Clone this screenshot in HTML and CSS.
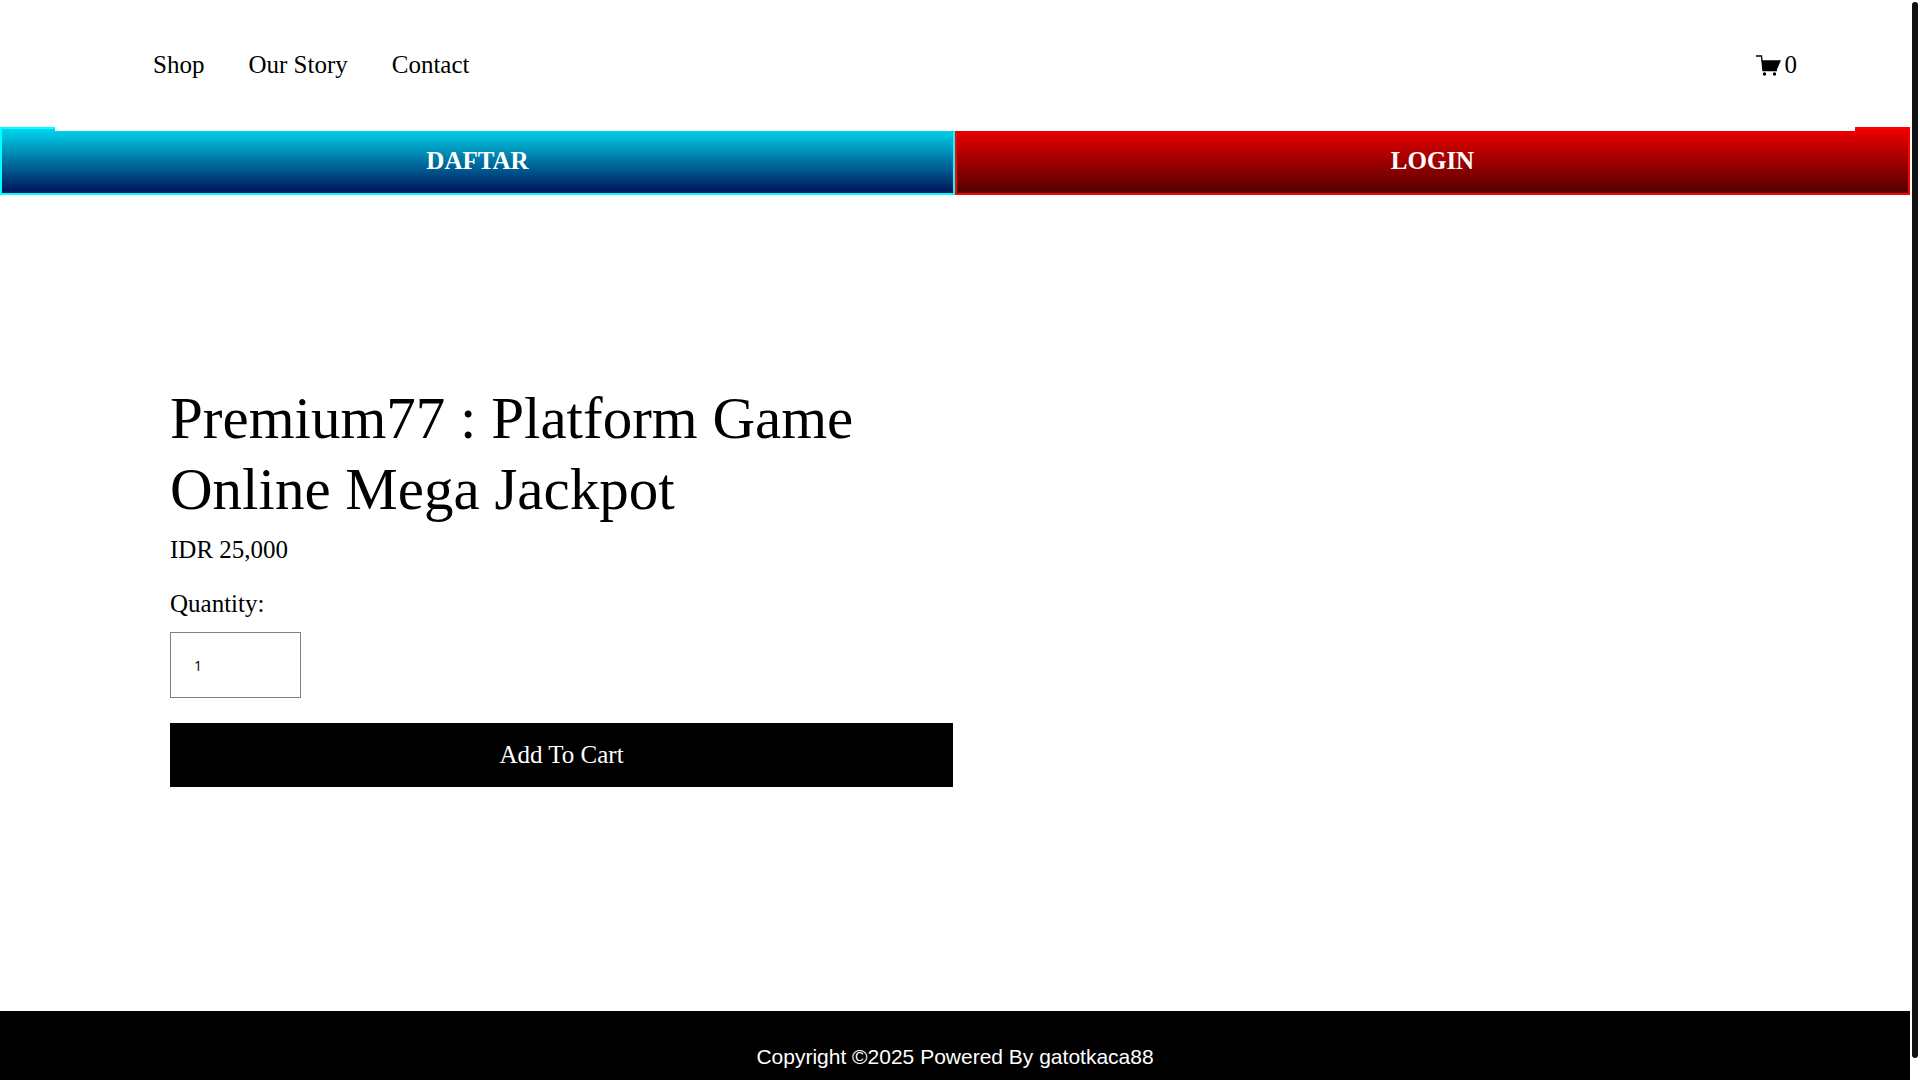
FILE: index.html
```html
<!DOCTYPE html>
<html lang="id">
<head>
  <meta charset="UTF-8">
  <meta name="viewport" content="width=device-width, initial-scale=1.0">
  <title>Premium77 : Platform Game Online Mega Jackpot</title>
  <link rel="stylesheet" href="styles.css">
</head>
<body>
    <!-- Header with navigation and cart -->
    <header class="header">
        <nav class="nav">
            <a href="#shop">Shop</a>
            <a href="#story">Our Story</a>
            <a href="#contact">Contact</a>
        </nav>
        <a href="#cart" class="cart" aria-label="Cart, 0 items">
            <svg class="cart-icon" width="25" height="21" viewBox="0 0 25 21" aria-hidden="true">
                <path d="M0 1H5.500L7 15.500H21" fill="none" stroke="#000" stroke-width="1.300"/>
                <path d="M5.600 5.200H25L20.500 15.500H7Z"/>
                <circle cx="8.500" cy="19" r="1.700"/>
                <circle cx="18.500" cy="19" r="1.700"/>
            </svg>
            <span>0</span>
        </a>
    </header>

    <!-- Register and login links -->
    <div class="actions">
        <a href="#daftar" class="action daftar">DAFTAR</a>
        <a href="#login" class="action login">LOGIN</a>
    </div>

    <!-- Product details -->
    <main class="product">
        <form class="details">
            <h1>Premium77 : Platform Game Online Mega Jackpot</h1>
            <p class="price">IDR 25,000</p>
            <label for="quantity">Quantity:</label>
            <input type="number" id="quantity" value="1" min="1">
            <button type="button">Add To Cart</button>
        </form>
    </main>

    <footer class="footer">
        <p>Copyright ©2025 Powered By gatotkaca88</p>
    </footer>

    <!-- Scroll indicator -->
    <div class="scroll-thumb"></div>
</body>
</html>
```

FILE: styles.css
```css
* {
    box-sizing: border-box;
}

body {
    display: flex;
    flex-direction: column;
    min-height: 100vh;
    margin: 0;
    padding-right: 10px; /* room for the scroll indicator */
    background-color: #fff;
    color: #000;
    font-family: "Liberation Serif", "Times New Roman", serif;
    font-size: 25px;
    line-height: 40px;
}

a {
    color: inherit;
    text-decoration: none;
}

/* Header overlaps the top edge of the action links */
.header {
    position: relative;
    z-index: 1;
    display: flex;
    justify-content: space-between;
    align-items: center;
    margin: 0 55px -4px;
    padding: 45px 58px 46px 98px;
    background-color: #fff;
}

.nav {
    display: flex;
    gap: 44px;
}

.cart {
    display: flex;
    align-items: center;
    gap: 4px;
}

/* Register and login */
.actions {
    display: grid;
    grid-template-columns: 1fr 1fr;
}

.action {
    padding: 12px;
    border: 2px solid;
    color: #fff;
    font-weight: bold;
    text-align: center;
}

.daftar {
    border-color: #00ffff;
    background: linear-gradient(#00d5ee, #001258);
}

.login {
    border-color: #ff0000;
    background: linear-gradient(#ee0000, #520000);
}

/* Product */
.product {
    flex: 1;
    padding: 188px 174px 200px 170px;
}

.details {
    display: flex;
    flex-direction: column;
    align-items: flex-start;
    width: 50%;
    min-width: 280px;
}

h1 {
    margin: 0;
    font-size: 59px;
    font-weight: normal;
    line-height: 71px;
}

.price {
    margin: 5px 0 14px;
}

#quantity {
    width: 131px;
    height: 66px;
    margin: 8px 0 25px;
    padding: 0 23px;
    border: 1px solid #808080;
    font-family: "Open Sans", sans-serif;
    font-size: 14px;
}

button {
    width: 100%;
    padding: 12px;
    border: 0;
    background-color: #000;
    color: #fff;
    font: inherit;
    cursor: pointer;
}

.footer {
    padding: 30px 20px 8px;
    background-color: #000;
    color: #fff;
    font-family: "Liberation Sans", Arial, sans-serif;
    font-size: 21px;
    line-height: 31px;
    text-align: center;
}

.footer p {
    margin: 0;
}

.scroll-thumb {
    position: fixed;
    top: 2px;
    right: 2px;
    bottom: 22px;
    width: 6px;
    border-radius: 3px;
    background-color: #111;
}
```
